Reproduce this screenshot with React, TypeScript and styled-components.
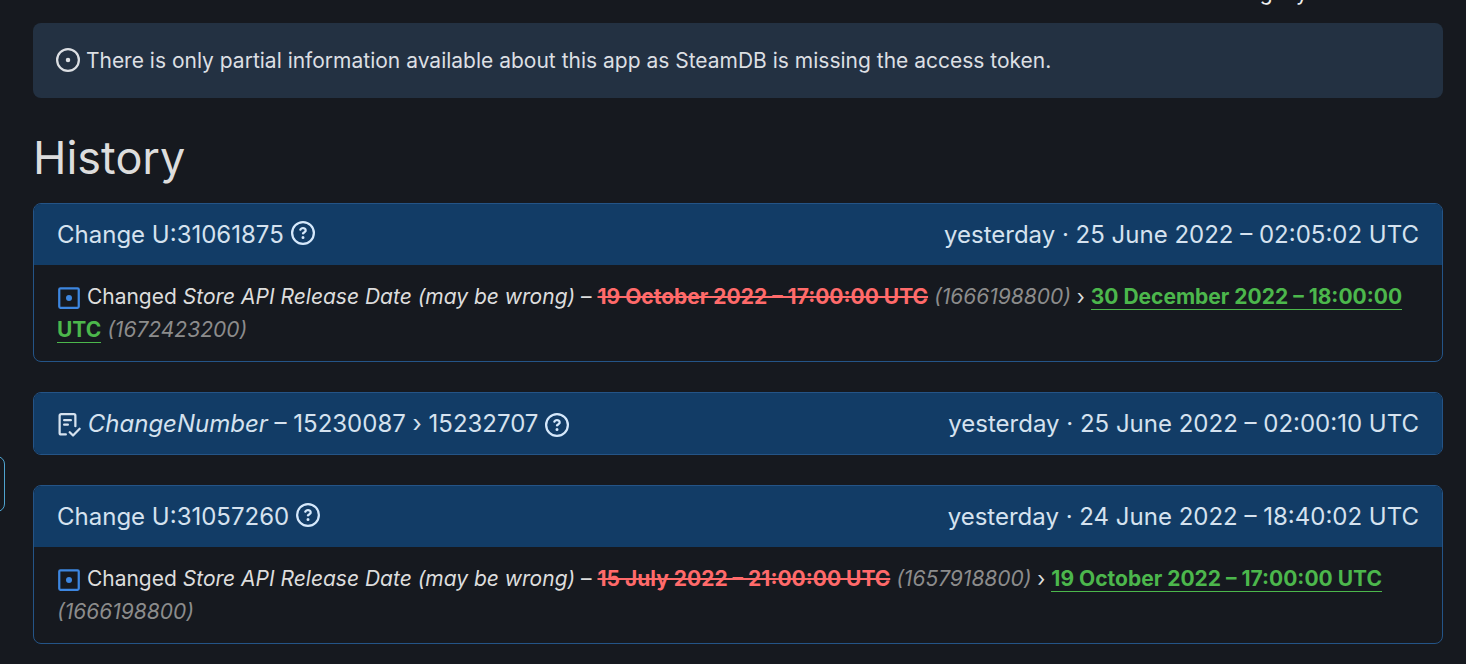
import React from "react";
import styled, { createGlobalStyle } from "styled-components";

const Global = createGlobalStyle`
  * { box-sizing: border-box; }
  body {
    margin: 0;
    background: #16191f;
    color: #ddd;
    font-family: Inter, "Liberation Sans", sans-serif;
    font-size: 21px;
    line-height: 33px;
    overflow: hidden;
  }
`;

const Page = styled.main`
  display: flow-root;
  position: relative;
  padding: 0 23px 20px 33px;
`;

const Intro = styled.p`
  margin: -24px 0 14px;
  padding-right: 130px;
  color: #eee;
  text-align: right;
`;

const SideTab = styled.button`
  position: absolute;
  left: -32px;
  top: 456px;
  width: 37px;
  height: 56px;
  padding: 0;
  border: 1px solid #4fa3cf;
  border-radius: 8px;
  background: transparent;
`;

const Notice = styled.div`
  padding: 21px 23px;
  border-radius: 8px;
  background: #233142;
  color: #dcdfe3;
`;

const Title = styled.h2`
  margin: 27px 0 12px;
  font-size: 45px;
  line-height: 66px;
  font-weight: 400;
`;

const Panel = styled.section`
  margin-bottom: 30px;
  border: 1px solid #245487;
  border-radius: 8px;
  overflow: hidden;
`;

const PanelHead = styled.header`
  display: flex;
  justify-content: space-between;
  padding: 12px 23px;
  background: #123c66;
  color: #d5e2ef;
  font-size: 24px;
  line-height: 37px;
`;

const PanelBody = styled.div`
  padding: 15px 23px;
`;

const HelpLink = styled.a`
  color: #d5e8fb;
`;

const Icon = styled.svg<{ $drop: number }>`
  width: 24px;
  height: 24px;
  fill: currentColor;
  vertical-align: ${(p) => -p.$drop}px;
`;

const Blue = styled.span`
  color: #3d86e0;
`;

const Old = styled.del`
  color: #ff6a6a;
  font-weight: 700;
`;

const New = styled.ins`
  border-bottom: 1px solid #4cb74c;
  color: #4cb74c;
  font-weight: 700;
  text-decoration: none;
`;

const Raw = styled.i`
  color: #8c8c8c;
`;

const IssueIcon = () => (
  <Icon viewBox="0 0 16 16" $drop={4} aria-hidden="true">
    <circle cx="8" cy="8" r="7.25" fill="none" stroke="currentColor" strokeWidth="1.5" />
    <circle cx="8" cy="8" r="1.5" />
  </Icon>
);

const QuestionIcon = ({ drop }: { drop: number }) => (
  <Icon viewBox="0 0 16 16" $drop={drop} aria-hidden="true">
    <path d="M0 8a8 8 0 1 1 16 0A8 8 0 0 1 0 8Zm8-6.5a6.5 6.5 0 1 0 0 13 6.5 6.5 0 0 0 0-13ZM6.92 6.085h.001a.749.749 0 1 1-1.342-.67c.169-.339.436-.701.849-.977C6.845 4.16 7.369 4 8 4a2.756 2.756 0 0 1 1.637.525c.503.377.863.965.863 1.725 0 .448-.115.83-.329 1.15-.205.307-.47.513-.692.662-.109.072-.22.138-.313.195l-.006.004a6.24 6.24 0 0 0-.26.16.952.952 0 0 0-.276.245.75.75 0 0 1-1.248-.832c.184-.264.42-.489.692-.661.103-.067.207-.132.313-.195l.007-.004c.1-.061.182-.11.258-.161a.969.969 0 0 0 .277-.245C8.96 6.514 9 6.427 9 6.25a.612.612 0 0 0-.262-.525A1.27 1.27 0 0 0 8 5.5c-.369 0-.595.09-.74.187a1.01 1.01 0 0 0-.34.398ZM9 11a1 1 0 1 1-2 0 1 1 0 0 1 2 0Z" />
  </Icon>
);

const ModifiedIcon = () => (
  <Icon viewBox="0 0 16 16" $drop={6} aria-hidden="true">
    <rect x="1.5" y="1.5" width="13" height="13" rx="0.8" fill="none" stroke="currentColor" strokeWidth="1.5" />
    <circle cx="8" cy="8" r="2" />
  </Icon>
);

const ChecklistIcon = () => (
  <Icon viewBox="0 0 16 16" $drop={5} aria-hidden="true">
    <g fill="none" stroke="currentColor" strokeWidth="1.5" strokeLinecap="round" strokeLinejoin="round">
      <path d="M5.9 14.25H2.75a1 1 0 0 1-1-1V1.75a1 1 0 0 1 1-1h8.5a1 1 0 0 1 1 1v7" />
      <path d="M4.75 4.75h4.5M4.75 7.75h2.5" />
      <path d="m8.5 12.8 2.2 2.2 4.4-4.5" />
    </g>
  </Icon>
);

type Change = {
  id: string;
  when: string;
  from: string;
  fromRaw: string;
  to: string;
  toRaw: string;
};

const ChangePanel = ({ id, when, from, fromRaw, to, toRaw }: Change) => (
  <Panel>
    <PanelHead>
      <span>
        Change U:{id}{" "}
        <HelpLink href="#help" aria-label="What is this change?"><QuestionIcon drop={2} /></HelpLink>
      </span>
      <time>{when}</time>
    </PanelHead>
    <PanelBody>
      <Blue><ModifiedIcon /></Blue> Changed <i>Store API Release Date (may be wrong)</i> –{" "}
      <Old>{from}</Old> <Raw>({fromRaw})</Raw> › <New>{to}</New> <Raw>({toRaw})</Raw>
    </PanelBody>
  </Panel>
);

export default function App() {
  return (
    <>
      <Global />
      <Page>
        <Intro>See more on Steam for the set legacy.</Intro>
        <SideTab aria-label="Open sidebar" />
        <Notice>
          <IssueIcon /> There is only partial information available about this app as SteamDB is missing the access token.
        </Notice>
        <Title>History</Title>
        <ChangePanel
          id="31061875"
          when="yesterday · 25 June 2022 – 02:05:02 UTC"
          from="19 October 2022 – 17:00:00 UTC"
          fromRaw="1666198800"
          to="30 December 2022 – 18:00:00 UTC"
          toRaw="1672423200"
        />
        <Panel>
          <PanelHead>
            <span>
              <ChecklistIcon /> <i>ChangeNumber</i> – 15230087 › 15232707{" "}
              <HelpLink href="#help" aria-label="What is a change number?"><QuestionIcon drop={5} /></HelpLink>
            </span>
            <time>yesterday · 25 June 2022 – 02:00:10 UTC</time>
          </PanelHead>
        </Panel>
        <ChangePanel
          id="31057260"
          when="yesterday · 24 June 2022 – 18:40:02 UTC"
          from="15 July 2022 – 21:00:00 UTC"
          fromRaw="1657918800"
          to="19 October 2022 – 17:00:00 UTC"
          toRaw="1666198800"
        />
      </Page>
    </>
  );
}
